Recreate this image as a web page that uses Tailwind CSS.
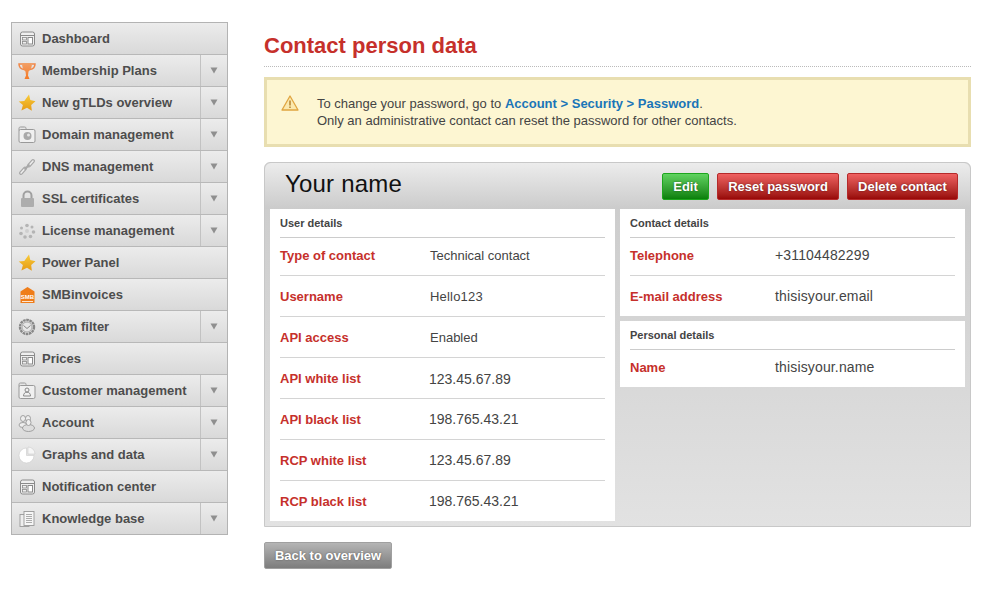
<!DOCTYPE html>
<html lang="en">
<head>
    <meta charset="UTF-8">
    <title>Contact person data</title>
    <script src="https://cdn.jsdelivr.net/npm/@tailwindcss/browser@4"></script>
</head>
<body class="bg-white font-['Liberation_Sans',Arial,sans-serif] text-[#444]">
    <svg class="absolute w-0 h-0">
        <defs>
            <linearGradient id="starFill" x1="0" y1="0" x2="0" y2="1"><stop offset="0" stop-color="#f8cb3a"/><stop offset="1" stop-color="#e59a14"/></linearGradient>
            <linearGradient id="cupFill" x1="0" y1="0" x2="0" y2="1"><stop offset="0" stop-color="#f2a068"/><stop offset="1" stop-color="#f47a26"/></linearGradient>
            <symbol id="panelIcon" viewBox="0 0 18 18"><rect x="1.500" y="2" width="14" height="14" rx="2" fill="#efefef" stroke="#8a8a8a"/><path d="M1.500 5.500h14" stroke="#8a8a8a"/><rect x="3.500" y="7.500" width="4" height="2.500" fill="none" stroke="#8a8a8a" stroke-width=".8"/><rect x="3.500" y="11.500" width="4" height="2.500" fill="none" stroke="#8a8a8a" stroke-width=".8"/><rect x="9" y="7.500" width="4.500" height="6.500" fill="#fff" stroke="#8a8a8a"/></symbol>
            <symbol id="starIcon" viewBox="0 0 18 18"><path d="M11 .5l1.300 5.600 5.200 1.200-4.300 3.700.6 5.800-4.800-3-5.600 2.600 1.500-5.400L.7 7.600l5.600-.6z" fill="url(#starFill)"/></symbol>
            <symbol id="arrowIcon" viewBox="0 0 8 7"><path d="M0.500 0.500h7L4 6.500z" fill="#8f8f8f"/></symbol>
        </defs>
    </svg>

    <div class="flex items-start w-[987px] h-[597px] overflow-hidden pt-[22px] pl-[11px]">
        <nav class="w-[217px] border border-[#b3b3b3] text-[13px] font-bold text-[#4d4d4d] [&>div]:h-[32px] [&>div]:flex [&>div]:items-center [&>div]:bg-gradient-to-b [&>div]:from-[#ececec] [&>div]:to-[#d9d9d9] [&>div]:border-b [&>div]:border-[#b8b8b8] [&>div:last-child]:h-[31px] [&>div:last-child]:border-b-0">
            <div><span class="w-[30px] pl-[7px] shrink-0"><svg class="w-[18px] h-[18px]"><use href="#panelIcon"/></svg></span><span class="flex-1">Dashboard</span></div>
            <div><span class="w-[30px] pl-[6px] shrink-0"><svg class="w-[18px] h-[18px]" viewBox="0 0 18 18"><path d="M4.500 2H1c0 3 1.500 5 5 5.500M13.500 2H17c0 3-1.500 5-5 5.500" fill="none" stroke="#f0884a" stroke-width="1.500"/><path d="M4 1h10c0 4-1 7-3.500 8.500L10 13.500l1.500 3.500h-5L8 13.500 7.500 9.500C5 8 4 5 4 1z" fill="url(#cupFill)"/></svg></span><span class="flex-1">Membership Plans</span><span class="w-[27px] h-full flex items-center justify-center border-l border-[#c2c2c2]"><svg class="w-[8px] h-[7px]"><use href="#arrowIcon"/></svg></span></div>
            <div><span class="w-[30px] pl-[6px] shrink-0"><svg class="w-[18px] h-[18px]"><use href="#starIcon"/></svg></span><span class="flex-1">New gTLDs overview</span><span class="w-[27px] h-full flex items-center justify-center border-l border-[#c2c2c2]"><svg class="w-[8px] h-[7px]"><use href="#arrowIcon"/></svg></span></div>
            <div><span class="w-[30px] pl-[6px] shrink-0"><svg class="w-[18px] h-[18px]" viewBox="0 0 18 18"><path d="M1 4.500V2.500C1 1.500 1.500 1 2.500 1h4c1 0 1.500 .5 1.500 1.500V3.500" fill="none" stroke="#999"/><rect x="1" y="3.500" width="16" height="13" rx="1.500" fill="#f0f0f0" stroke="#999"/><circle cx="9.500" cy="10" r="4" fill="#a8a8a8"/><circle cx="10.500" cy="9" r="1.500" fill="#e4e4e4"/></svg></span><span class="flex-1">Domain management</span><span class="w-[27px] h-full flex items-center justify-center border-l border-[#c2c2c2]"><svg class="w-[8px] h-[7px]"><use href="#arrowIcon"/></svg></span></div>
            <div><span class="w-[30px] pl-[6px] shrink-0"><svg class="w-[18px] h-[18px]" viewBox="0 0 18 18" fill="none" stroke="#a8a8a8"><path d="M3 15l4-4.500" stroke-width="4" stroke-linecap="round"/><path d="M11 7.500l4-4.500" stroke-width="4" stroke-linecap="round"/><path d="M3 15l4-4.500M11 7.500l4-4.500" stroke="#eee" stroke-width="1.500" stroke-linecap="round"/><path d="M6.500 11.500l5-5" stroke-width="2"/></svg></span><span class="flex-1">DNS management</span><span class="w-[27px] h-full flex items-center justify-center border-l border-[#c2c2c2]"><svg class="w-[8px] h-[7px]"><use href="#arrowIcon"/></svg></span></div>
            <div><span class="w-[30px] pl-[7px] shrink-0"><svg class="w-[18px] h-[18px]" viewBox="0 0 18 18"><path d="M4.500 8V5.500a4 4 0 0 1 8 0V8" fill="none" stroke="#a0a0a0" stroke-width="2"/><rect x="2" y="8" width="13" height="9" rx="1" fill="#adadad"/></svg></span><span class="flex-1">SSL certificates</span><span class="w-[27px] h-full flex items-center justify-center border-l border-[#c2c2c2]"><svg class="w-[8px] h-[7px]"><use href="#arrowIcon"/></svg></span></div>
            <div><span class="w-[30px] pl-[6px] shrink-0"><svg class="w-[18px] h-[18px]" viewBox="0 0 18 18" fill="#b4b4b4"><circle cx="9" cy="3.500" r="1.800"/><circle cx="14" cy="5" r="1.500"/><circle cx="15.500" cy="10" r="1.800"/><circle cx="12.500" cy="14.500" r="1.800"/><circle cx="7" cy="15" r="1.800"/><circle cx="3" cy="11.500" r="1.800"/><circle cx="3.500" cy="6" r="1.500"/><circle cx="9" cy="9" r="2" fill="#cfcfcf"/></svg></span><span class="flex-1">License management</span><span class="w-[27px] h-full flex items-center justify-center border-l border-[#c2c2c2]"><svg class="w-[8px] h-[7px]"><use href="#arrowIcon"/></svg></span></div>
            <div><span class="w-[30px] pl-[6px] shrink-0"><svg class="w-[18px] h-[18px]"><use href="#starIcon"/></svg></span><span class="flex-1">Power Panel</span></div>
            <div><span class="w-[30px] pl-[7px] shrink-0"><svg class="w-[18px] h-[18px]" viewBox="0 0 18 18"><path d="M1.500 5.500L8.500 1 15.500 5.500V17H1.500z" fill="#ef7d1a"/><rect x="3" y="15" width="11" height=".8" fill="#fff"/><text x="8.500" y="13" text-anchor="middle" font-size="6" font-family="Liberation Sans" fill="#fff">SMB</text></svg></span><span class="flex-1">SMBinvoices</span></div>
            <div><span class="w-[30px] pl-[6px] shrink-0"><svg class="w-[18px] h-[18px]" viewBox="0 0 18 18"><circle cx="9" cy="9" r="7" fill="#e8e8e8" stroke="#888" stroke-width="2.400" stroke-dasharray="2.600 .6"/><circle cx="9" cy="9" r="5" fill="#e6e6e6" stroke="#999" stroke-width=".8"/><path d="M5.500 7.500L9 10.500l3.500-3" fill="none" stroke="#888"/></svg></span><span class="flex-1">Spam filter</span><span class="w-[27px] h-full flex items-center justify-center border-l border-[#c2c2c2]"><svg class="w-[8px] h-[7px]"><use href="#arrowIcon"/></svg></span></div>
            <div><span class="w-[30px] pl-[7px] shrink-0"><svg class="w-[18px] h-[18px]"><use href="#panelIcon"/></svg></span><span class="flex-1">Prices</span></div>
            <div><span class="w-[30px] pl-[6px] shrink-0"><svg class="w-[18px] h-[18px]" viewBox="0 0 18 18"><path d="M1 4.500V2.500C1 1.500 1.500 1 2.500 1h4c1 0 1.500 .5 1.500 1.500V3.500" fill="none" stroke="#999"/><rect x="1" y="3.500" width="16" height="13" rx="1.500" fill="#f0f0f0" stroke="#999"/><circle cx="9" cy="8" r="2" fill="none" stroke="#888"/><path d="M5.500 14c0-2.500 1.500-3.800 3.500-3.800s3.500 1.300 3.500 3.800z" fill="none" stroke="#888"/></svg></span><span class="flex-1">Customer management</span><span class="w-[27px] h-full flex items-center justify-center border-l border-[#c2c2c2]"><svg class="w-[8px] h-[7px]"><use href="#arrowIcon"/></svg></span></div>
            <div><span class="w-[30px] pl-[6px] shrink-0"><svg class="w-[18px] h-[18px]" viewBox="0 0 18 18" fill="#eee" stroke="#999" stroke-width=".9"><ellipse cx="5" cy="4.500" rx="2.500" ry="3"/><ellipse cx="10" cy="4.500" rx="2.500" ry="3"/><ellipse cx="5" cy="11" rx="4" ry="2.500"/><ellipse cx="10.500" cy="14" rx="6" ry="3.500" fill="#ddd"/><ellipse cx="10.500" cy="8.500" rx="2.500" ry="3"/></svg></span><span class="flex-1">Account</span><span class="w-[27px] h-full flex items-center justify-center border-l border-[#c2c2c2]"><svg class="w-[8px] h-[7px]"><use href="#arrowIcon"/></svg></span></div>
            <div><span class="w-[30px] pl-[6px] shrink-0"><svg class="w-[18px] h-[18px]" viewBox="0 0 18 18"><path d="M8.500 2v7.500H16A7.500 7.500 0 1 1 8.500 2z" fill="#fff" stroke="#c4c4c4" stroke-width=".5"/><path d="M10 1a7 7 0 0 1 7 7h-7z" fill="#f6f6f6" stroke="#c4c4c4" stroke-width=".5"/></svg></span><span class="flex-1">Graphs and data</span><span class="w-[27px] h-full flex items-center justify-center border-l border-[#c2c2c2]"><svg class="w-[8px] h-[7px]"><use href="#arrowIcon"/></svg></span></div>
            <div><span class="w-[30px] pl-[7px] shrink-0"><svg class="w-[18px] h-[18px]"><use href="#panelIcon"/></svg></span><span class="flex-1">Notification center</span></div>
            <div><span class="w-[30px] pl-[7px] shrink-0"><svg class="w-[18px] h-[18px]" viewBox="0 0 18 18" fill="#eee" stroke="#999" stroke-width=".9"><rect x="1" y="4.500" width="9" height="12"/><rect x="5" y="1.500" width="10" height="14" fill="#f6f6f6"/><path d="M7 4.500h6M7 6.500h6M7 8.500h6M7 10.500h6M7 12.500h6" stroke-width=".8"/></svg></span><span class="flex-1">Knowledge base</span><span class="w-[27px] h-full flex items-center justify-center border-l border-[#c2c2c2]"><svg class="w-[8px] h-[7px]"><use href="#arrowIcon"/></svg></span></div>
        </nav>

        <main class="w-[707px] ml-[36px]">
            <h1 class="h-[45px] border-b border-dotted border-[#bbb] text-[22px] leading-[47px] font-bold text-[#c6302b]">Contact person data</h1>

            <div class="flex items-start h-[70px] mt-[10px] border-[3px] border-[#e8deb0] bg-[#fdf6d2] text-[13px] leading-[17px] text-[#444]">
                <svg class="w-[18px] h-[16px] mt-[15px] ml-[14px] mr-[18px]" viewBox="0 0 18 16"><path d="M9 1L17 15H1z" fill="#fbe9ae" stroke="#e0a540" stroke-width="1.300" stroke-linejoin="round"/><path d="M9 5.500v5M9 11.500v1.500" stroke="#a8741c" stroke-width="1.300"/></svg>
                <p class="pt-[15px]">To change your password, go to <a href="#" class="font-bold text-[#1a75b8]">Account &gt; Security &gt; Password</a>.<br>Only an administrative contact can reset the password for other contacts.</p>
            </div>

            <section class="h-[365px] mt-[15px] border border-[#c8c8c8] rounded-t-[6px] bg-gradient-to-b from-[#cdcdcd] from-[13%] to-[#e2e2e2]">
                <div class="flex items-center h-[46px] pl-[20px] pr-[12px] rounded-t-[6px] bg-gradient-to-b from-[#ececec] to-[#cbcbcb]">
                    <h2 class="flex-1 -mt-[4px] text-[24px] tracking-[0.2px] leading-[42px] text-[#111]">Your name</h2>
                    <div class="flex gap-[8px] mt-[1px] text-[13px] font-bold text-white [&>button]:h-[27px] [&>button]:rounded-[2px] [&>button]:[text-shadow:0_0_2px_rgba(0,0,0,0.5)]">
                        <button class="w-[47px] border border-[#1ea51e] bg-gradient-to-b from-[#5fd35f] to-[#088008]">Edit</button>
                        <button class="w-[122px] border border-[#b52a2a] bg-gradient-to-b from-[#ef6060] to-[#980707]">Reset password</button>
                        <button class="w-[111px] border border-[#b52a2a] bg-gradient-to-b from-[#ef6060] to-[#980707]">Delete contact</button>
                    </div>
                </div>

                <div class="flex items-start gap-[5px] px-[5px]">
                    <div class="w-[345px] h-[312px] bg-white px-[10px]">
                        <h3 class="h-[29px] border-b border-[#ccc] text-[11px] leading-[28px] font-bold text-[#444]">User details</h3>
                        <dl class="text-[13px] [&>div]:h-[41px] [&>div]:flex [&>div]:items-center [&>div]:border-b [&>div]:border-[#d4d4d4] [&>div:first-child]:h-[38px] [&>div:first-child]:pb-[1px] [&>div:last-child]:h-[40px] [&>div:last-child]:border-b-0 [&_dt]:w-[150px] [&_dt]:font-bold [&_dt]:text-[#c6302b] [&>div:not(:first-child)>dt]:mt-[2px]">
                            <div><dt>Type of contact</dt><dd>Technical contact</dd></div>
                            <div><dt>Username</dt><dd class="mt-[2px] tracking-[0.2px]">Hello123</dd></div>
                            <div><dt>API access</dt><dd class="mt-[2px]">Enabled</dd></div>
                            <div><dt>API white list</dt><dd class="-ml-[1px] mt-[2px] text-[14px]">123.45.67.89</dd></div>
                            <div><dt>API black list</dt><dd class="-ml-[1px] text-[14px]">198.765.43.21</dd></div>
                            <div><dt>RCP white list</dt><dd class="-ml-[1px] text-[14px]">123.45.67.89</dd></div>
                            <div><dt>RCP black list</dt><dd class="-ml-[1px] text-[14px]">198.765.43.21</dd></div>
                        </dl>
                    </div>

                    <div class="w-[345px] flex flex-col gap-[5px]">
                        <div class="h-[107px] bg-white px-[10px]">
                            <h3 class="h-[29px] border-b border-[#ccc] text-[11px] leading-[28px] font-bold text-[#444]">Contact details</h3>
                            <dl class="text-[13px] [&>div]:h-[40px] [&>div]:flex [&>div]:items-center [&>div:first-child]:h-[38px] [&>div:first-child]:pb-[1px] [&>div:first-child]:border-b [&>div:first-child]:border-[#d4d4d4] [&_dt]:w-[145px] [&_dt]:font-bold [&_dt]:text-[#c6302b] [&_dd]:text-[14px] [&_dd]:tracking-[0.15px]">
                                <div><dt>Telephone</dt><dd class="mb-[2px]">+31104482299</dd></div>
                                <div><dt class="mt-[2px]">E-mail address</dt><dd>thisisyour.email</dd></div>
                            </dl>
                        </div>
                        <div class="h-[66px] bg-white px-[10px]">
                            <h3 class="h-[29px] border-b border-[#ccc] text-[11px] leading-[28px] font-bold text-[#444]">Personal details</h3>
                            <dl class="text-[13px] [&_dt]:w-[145px] [&_dt]:font-bold [&_dt]:text-[#c6302b] [&_dd]:text-[14px] [&_dd]:tracking-[0.15px]">
                                <div class="flex items-center h-[36px]"><dt>Name</dt><dd class="mb-[2px]">thisisyour.name</dd></div>
                            </dl>
                        </div>
                    </div>
                </div>
            </section>

            <button class="block w-[128px] h-[27px] mt-[15px] border border-[#a0a0a0] rounded-[2px] bg-gradient-to-b from-[#b5b5b5] to-[#7d7d7d] text-[13px] font-bold text-white [text-shadow:0_0_2px_rgba(0,0,0,0.4)]">Back to overview</button>
        </main>
    </div>
</body>
</html>
